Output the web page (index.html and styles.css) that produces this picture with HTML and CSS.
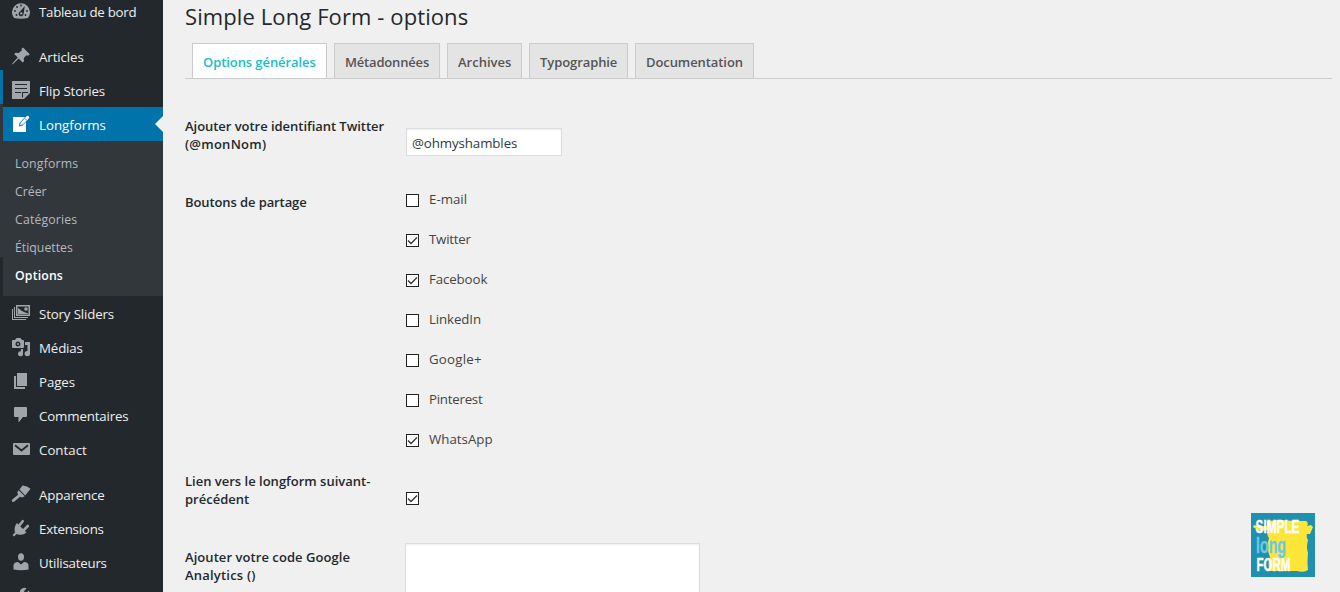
FILE: index.html
```html
<!DOCTYPE html>
<html lang="fr">
<head>
<meta charset="utf-8">
<title>Simple Long Form - options</title>
<link rel="stylesheet" href="styles.css">
</head>
<body>
<div class="layout">
<nav class="sidebar">
  <div class="strip"></div>
  <ul class="menu">
    <li class="item dash"><svg class="icon" viewBox="0 0 20 20"><path d="M3 17A9 9 0 1 1 17 17Q10 18.500 3 17Z"/><g class="hole"><circle cx="10" cy="4.500" r=".9"/><circle cx="6" cy="6" r=".9"/><circle cx="4" cy="10" r=".9"/><circle cx="16" cy="10" r=".9"/><circle cx="5.500" cy="14" r=".9"/><circle cx="14.500" cy="14" r=".9"/><path fill-rule="evenodd" d="m13.800 5-1.300 8.500a2.500 2.500 0 1 1-3.500-3Zm-3.500 6.200a1.200 1.200 0 1 0 0 2.400 1.200 1.200 0 0 0 0-2.400Z"/></g></svg><span class="t-dash">Tableau de bord</span></li>
    <li class="item gap"><svg class="icon" viewBox="0 0 20 20"><path d="M10.400 3 12 1.500 18.800 8.300 17.200 9.800 15.600 9.200 12.700 12 13 15.200 11.600 16.500 7.700 12.500 2 18 1 18.500 1.500 17.300 6.700 11.500 3.200 8 4.500 6.700 7.700 7 10.900 4.200Z"/></svg><span class="t-art">Articles</span></li>
    <li class="item"><svg class="icon" viewBox="0 0 20 20"><path fill-rule="evenodd" d="M1 1h18v12l-6 6H1ZM4 4v1h12V4ZM4 8v1h12V8ZM4 12v1h6v-1ZM12 17.500V13h5v-1h-6v5.500Z"/></svg><span class="t-flip">Flip Stories</span></li>
    <li class="item current"><svg class="icon" viewBox="0 0 20 20"><path d="M2 3h12L8.500 9 8 12.500l3.500-1L15 8v10H2Z"/><path d="m9 11 .8-2.500 5.800-6.300q1-1 2.200 0 1.100 1.100 0 2.200L11.800 10.500Z"/><path class="cut" d="m14.100 4.700 1.700 1.700"/></svg><span class="t-long">Longforms</span></li>
    <li class="submenu">
      <a class="s-long">Longforms</a><a class="s-creer">Créer</a><a class="s-cat">Catégories</a><a class="s-eti">Étiquettes</a><a class="on">Options</a>
    </li>
    <li class="item"><svg class="icon" viewBox="0 0 20 20"><path fill-rule="evenodd" d="M5 2h14v11H5ZM6.500 3.500v8h11v-8Z"/><path d="M7 11V5l4 3 2 1 4 1.500V11Z"/><circle cx="15" cy="6" r="1.800"/><path d="M3 4h1v10h13v1H3ZM1 6h1v10h13v1H1Z"/></svg><span class="t-story">Story Sliders</span></li>
    <li class="item"><svg class="icon" viewBox="0 0 20 20"><path fill-rule="evenodd" d="M2 3h2l1.500-2h4L11 3h1q1 0 1 1v6q0 1-1 1H2q-1 0-1-1V4q0-1 1-1ZM7 4.500a2.500 2.500 0 1 0 0 5 2.500 2.500 0 0 0 0-5Z"/><circle cx="7" cy="7" r="1"/><path d="M14 5h5v11.500a2.700 2.700 0 1 1-2.500-2.600V8H14Z"/><path d="M10 12h2v4.700a2.500 2.500 0 1 1-2-2.400Z"/></svg><span class="t-med">Médias</span></li>
    <li class="item"><svg class="icon" viewBox="0 0 20 20"><path d="M6 2h10v13H6ZM3 5h2v11h9v2H3Z"/></svg><span class="t-pag">Pages</span></li>
    <li class="item"><svg class="icon" viewBox="0 0 20 20"><path d="M4 2h11q1 0 1 1v8q0 1-1 1h-3l-4.500 5.500V12H4q-1 0-1-1V3q0-1 1-1Z"/></svg><span class="t-com">Commentaires</span></li>
    <li class="item"><svg class="icon" viewBox="0 0 20 20"><path d="M3 4h15q1 0 1 1v10q0 1-1 1H3q-1 0-1-1V5q0-1 1-1Z"/><path class="cut" d="m4 6.200 6.500 5.300L17 6.200"/></svg><span class="t-con">Contact</span></li>
    <li class="item gap"><svg class="icon" viewBox="0 0 20 20"><path d="m8.500 5.500 2.800-3.800q.7-.7 1.500 0L16 2.500l3.500 2.200-5.300 6.700Z"/><path d="m7.700 6.300 6 6-2.700 1.200-2-.8-5.600 4.900q-2 1.200-2.600-.6 0-1 .8-1.700L7 10.700 6.300 8.200Z"/></svg><span class="t-app">Apparence</span></li>
    <li class="item"><svg class="icon" viewBox="0 0 20 20"><path d="m6 5 9.500 9.500q-3.300 3-7.500 2.200L5.500 16 3 18.500 1.500 17 4 14.500Q2.500 9 6 5Z"/><path class="plug" d="m8.500 7.200 3.200-4M13 12l3.800-4"/></svg><span class="t-ext">Extensions</span></li>
    <li class="item"><svg class="icon" viewBox="0 0 20 20"><ellipse cx="10" cy="5" rx="3" ry="3.700"/><path d="M2.500 17.500V13q.7-3 4.500-3l3 2.500L13 10q3.800 0 4.500 3v4.500Q10 19 2.500 17.500Z"/></svg><span class="t-uti">Utilisateurs</span></li>
    <li class="item"><svg class="icon" viewBox="0 0 20 20"><path d="M15.500 2.500 12.800 5.200l2 2L18 4.500q1 4-2 5.500t-4 .4L5 17.500q-2 1-2.500-1.200L9 9q-1-5 2-6.500t4.500 0Z"/></svg></li>
  </ul>
</nav>
<main class="content">
  <h1><span>Simple Long Form - options</span></h1>
  <div class="tabs">
    <a class="tab active" style="width:135px"><span class="b-opt">Options générales</span></a>
    <a class="tab" style="width:106px"><span class="b-met">Métadonnées</span></a>
    <a class="tab" style="width:75px"><span class="b-arc">Archives</span></a>
    <a class="tab" style="width:99px"><span class="b-typ">Typographie</span></a>
    <a class="tab" style="width:119px"><span class="b-doc">Documentation</span></a>
  </div>
  <div class="form">
    <div class="row twitter"><div class="label"><span class="l-aj">Ajouter votre identifiant Twitter</span><br><span class="l-mon">(@monNom)</span></div><div class="field"><span>@ohmyshambles</span></div></div>
    <div class="row share"><div class="label"><span class="l-bou">Boutons de partage</span></div>
      <div class="checks">
        <div class="check"><i class="box"></i><span class="c-em">E-mail</span></div>
        <div class="check"><i class="box"><svg viewBox="0 0 13 13"><path d="m2 6.500 3 3 6-6"/></svg></i><span class="c-tw">Twitter</span></div>
        <div class="check"><i class="box"><svg viewBox="0 0 13 13"><path d="m2 6.500 3 3 6-6"/></svg></i><span class="c-fa">Facebook</span></div>
        <div class="check"><i class="box"></i><span class="c-li">LinkedIn</span></div>
        <div class="check"><i class="box"></i><span class="c-go">Google+</span></div>
        <div class="check"><i class="box"></i><span class="c-pi">Pinterest</span></div>
        <div class="check"><i class="box"><svg viewBox="0 0 13 13"><path d="m2 6.500 3 3 6-6"/></svg></i><span class="c-wh">WhatsApp</span></div>
      </div></div>
    <div class="row link"><div class="label"><span class="l-lie">Lien vers le longform suivant-</span><br><span class="l-pre">précédent</span></div><i class="box single"><svg viewBox="0 0 13 13"><path d="m2 6.500 3 3 6-6"/></svg></i></div>
    <div class="row code"><div class="label"><span class="l-cod">Ajouter votre code Google</span><br><span class="l-ana">Analytics ()</span></div><div class="area"></div></div>
  </div>
</main>
</div>
<svg class="logo" viewBox="0 0 64 64">
  <path fill="#218faf" d="M0 0h64v64H0z"/>
  <path class="shape" d="M16 8 30 7l14 1 11 0q3 2 1 5l4-1 2 2-3 7-3 0q-1 3 1 6-2 8 0 13-1 9 0 17-4 3-11 1H19q-3-7 0-14-4-9-1-19-3-4-1-8-9 2-15-3l1-2q6 2 13 1Z"/>
  <g class="white"><text x="4.500" y="20" textLength="44" lengthAdjust="spacingAndGlyphs">SIMPLE</text><text x="5.500" y="58" textLength="34" lengthAdjust="spacingAndGlyphs">FORM</text></g>
  <text class="long" x="5" y="40" textLength="30" lengthAdjust="spacingAndGlyphs">long</text>
</svg>
</body>
</html>
```
FILE: styles.css
```css
* { box-sizing: border-box; }
body { margin: 0; background: #f0f0f0; color: #444; font: 13.3px/18px "Open Sans", "Noto Sans", sans-serif; width: 1340px; height: 592px; overflow: hidden; }
.layout { display: flex; height: 592px; overflow: hidden; }
span, a { white-space: nowrap; }
.sidebar { width: 163px; flex: none; background: #23282d; display: flex; overflow: hidden; }
.strip { width: 3px; flex: none; background: linear-gradient(#23282d 70px, #0073aa 70px, #0073aa 104px, #32373c 104px, #32373c 257px, #23282d 257px); }
.menu { flex: 1; margin: -5px 0 0; padding: 0; list-style: none; }
.item { height: 34px; padding-left: 8px; display: flex; align-items: center; color: #eee; letter-spacing: -.15px; }
.item.gap { margin-top: 11px; }
.icon { width: 20px; height: 20px; margin: -2px 8px 0 0; fill: #a0a5aa; flex: none; }
.icon .hole { fill: #23282d; }
.icon .cut { stroke: #23282d; stroke-width: 1.800; fill: none; }
.icon .plug { stroke: #a0a5aa; stroke-width: 2.600; stroke-linecap: round; fill: none; }
.t-dash { letter-spacing: -.27px; }
.t-con { letter-spacing: 0; }
.t-long { letter-spacing: 0; }
.t-art, .t-pag { letter-spacing: -.1px; }
.t-uti, .t-ext { letter-spacing: -.22px; }
.current { background: #0073aa; color: #fff; position: relative; margin-top: -1px; padding-top: 1px; }
.current::after { content: ""; position: absolute; right: 0; top: 9px; border: 8px solid transparent; border-left: 0; border-right-color: #f0f0f0; }
.current .icon { fill: #fff; }
.current .cut { stroke: #0073aa; stroke-width: .8; }
.submenu { background: #32373c; height: 155px; padding: 9px 12px; margin-bottom: 1px; font-size: 12.300px; color: #b4b9be; }
.submenu a { display: block; height: 28px; line-height: 28px; }
.submenu .s-long, .submenu .s-cat { letter-spacing: .15px; }
.submenu .on { color: #fff; font-weight: 600; letter-spacing: .15px; }
.content { flex: 1; padding: 2px 8px 0 22px; }
h1 { margin: 0; height: 41px; font-size: 22px; font-weight: 400; line-height: 29px; letter-spacing: .1px; color: #23282d; }
.tabs { height: 36px; border-bottom: 1px solid #ccc; display: flex; gap: 7px; padding-left: 7px; }
.tab { height: 35px; border: 1px solid #ccc; border-bottom: 0; background: #e4e4e4; color: #555; font-weight: 600; font-size: 13px; letter-spacing: -.08px; padding: 9px 0 0 10px; }
.b-met { letter-spacing: -.18px; }
.b-arc { letter-spacing: 0; }
.tab.active { height: 36px; background: #fff; color: #15bfc5; border-bottom: 1px solid #ccc; }
.row { display: flex; }
.label { width: 221px; flex: none; color: #23282d; font-weight: 600; font-size: 13px; }
.l-aj { letter-spacing: -.04px; }
.l-mon { letter-spacing: .25px; }
.l-bou { letter-spacing: -.11px; }
.l-cod { letter-spacing: .06px; }
.l-ana { letter-spacing: .2px; }
.l-bou { letter-spacing: -.1px; }
.twitter { padding-top: 38px; height: 114px; }
.field { width: 156px; height: 28px; margin-top: 11px; border: 1px solid #ddd; background: #fff; color: #32373c; letter-spacing: -.1px; padding: 5px; box-shadow: inset 0 1px 2px rgba(0,0,0,.07); }
.share { height: 279px; }
.checks { margin-top: -3px; }
.check { height: 40px; display: flex; gap: 10px; }
.c-tw, .c-pi { letter-spacing: -.25px; }
.c-fa, .c-li { letter-spacing: -.12px; }
.c-go { letter-spacing: .2px; }
.box { width: 13px; height: 13px; margin-top: 4px; border: 1px solid #222; background: #fff; display: block; }
.box svg { display: block; width: 13px; height: 13px; margin: -1px; fill: none; stroke: #333; stroke-width: 1.300; }
.single { margin-top: 20px; }
.link { height: 76px; }
.area { width: 295px; height: 70px; margin: -5px 0 0 -1px; border: 1px solid #ddd; background: #fff; box-shadow: inset 0 1px 2px rgba(0,0,0,.07); }
.logo { position: absolute; left: 1251px; top: 513px; width: 64px; height: 64px; }
.shape { fill: #fee638; }
.white { fill: #fff; stroke: #fff; stroke-width: .4; font: bold 17.500px "Liberation Sans", sans-serif; }
.long { fill: #6cc9e6; stroke: #6cc9e6; stroke-width: .4; font: bold 22px "Liberation Sans", sans-serif; }
```
